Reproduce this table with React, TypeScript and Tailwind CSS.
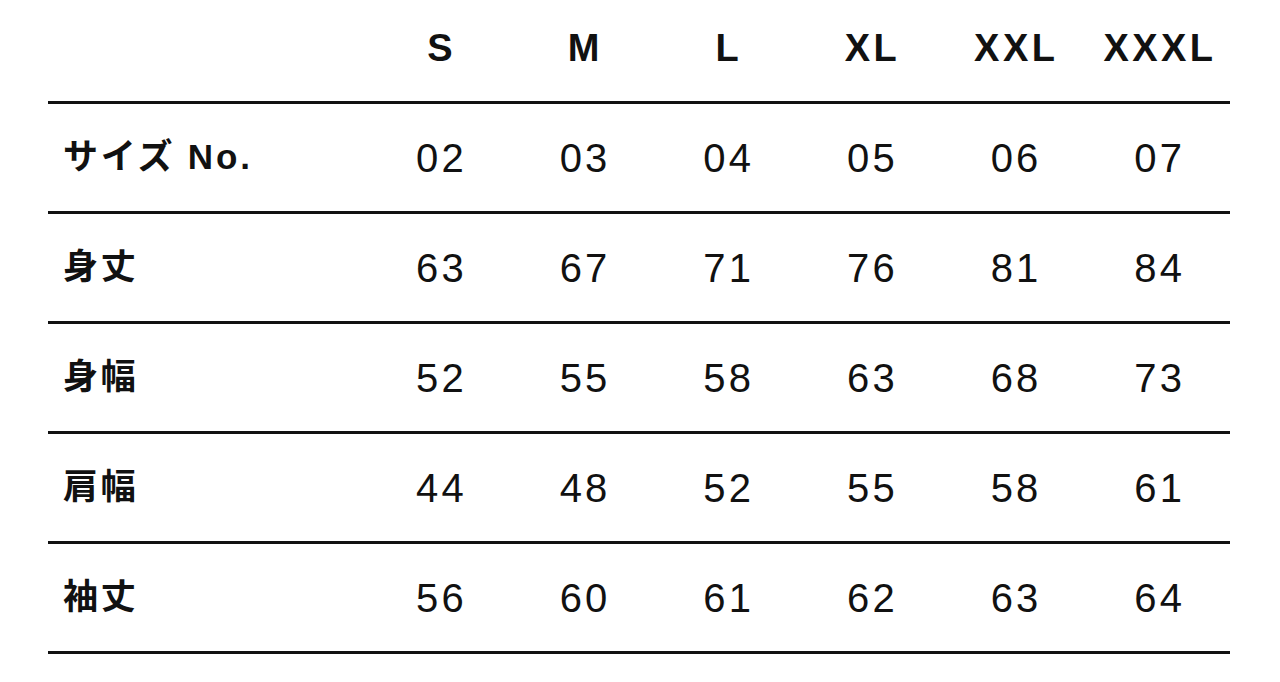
import React from "react";

const sizes = ["S", "M", "L", "XL", "XXL", "XXXL"];
const rows: { label: string; values: string[] }[] = [
  { label: "サイズ No.", values: ["02", "03", "04", "05", "06", "07"] },
  { label: "身丈", values: ["63", "67", "71", "76", "81", "84"] },
  { label: "身幅", values: ["52", "55", "58", "63", "68", "73"] },
  { label: "肩幅", values: ["44", "48", "52", "55", "58", "61"] },
  { label: "袖丈", values: ["56", "60", "61", "62", "63", "64"] },
];

export default function App() {
  return (
    <div
      className="w-[1280px] h-[682px] bg-white text-[#111] overflow-hidden"
      style={{ fontFamily: '"Liberation Sans", "Noto Sans CJK JP", sans-serif' }}
    >
      <div className="ml-[48px] w-[1182px]">
        <div className="grid grid-cols-[320px_repeat(6,1fr)] h-[104px] border-b-[3px] border-[#111] items-center">
          <div />
          {sizes.map((s) => (
            <div
              key={s}
              className="text-center font-bold text-[38px] tracking-[0.09em] pl-[0.09em] pb-[4px]"
            >
              {s}
            </div>
          ))}
        </div>
        {rows.map((r) => (
          <div
            key={r.label}
            className="grid grid-cols-[320px_repeat(6,1fr)] h-[110px] border-b-[3px] border-[#111] items-center"
          >
            <div className="pl-[15px] font-bold text-[35px] tracking-[0.08em]">
              {r.label}
            </div>
            {r.values.map((v, i) => (
              <div
                key={i}
                className="text-center text-[40px] tracking-[0.08em] pl-[0.08em]"
              >
                {v}
              </div>
            ))}
          </div>
        ))}
      </div>
    </div>
  );
}
